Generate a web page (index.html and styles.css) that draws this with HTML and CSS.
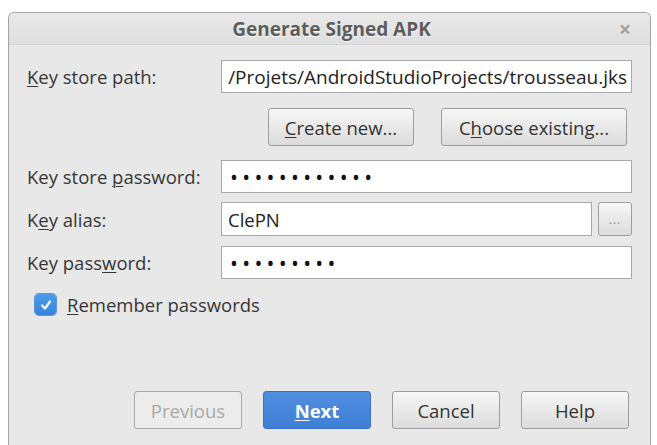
FILE: index.html
```html
<!DOCTYPE html>
<html lang="en">
<head>
    <meta charset="UTF-8">
    <title>Generate Signed APK</title>
    <link rel="stylesheet" href="styles.css">
</head>
<body>
    <div class="window">
        <div class="titlebar">
            <span class="title">Generate Signed APK</span>
            <span class="close">×</span>
        </div>
        <div class="content">
            <div class="row row-path">
                <label class="label"><u>K</u>ey store path:</label>
                <div class="field path"><span>/Projets/AndroidStudioProjects/trousseau.jks</span></div>
            </div>
            <div class="store-buttons">
                <button class="btn btn-create"><u>C</u>reate new...</button>
                <button class="btn btn-choose">C<u>h</u>oose existing...</button>
            </div>
            <div class="row row-pass">
                <label class="label">Key store <u>p</u>assword:</label>
                <div class="field"><span class="dots">••••••••••••</span></div>
            </div>
            <div class="row row-alias">
                <label class="label">K<u>e</u>y alias:</label>
                <div class="alias">
                    <div class="field">ClePN</div>
                    <button class="btn btn-more">...</button>
                </div>
            </div>
            <div class="row row-keypass">
                <label class="label">Key pass<u>w</u>ord:</label>
                <div class="field"><span class="dots">•••••••••</span></div>
            </div>
            <div class="remember">
                <span class="checkbox">
                    <svg width="14" height="14" viewBox="0 0 14 14"><path d="M3 7.5 L6 10.5 L11 3.5" fill="none" stroke="#fff" stroke-width="2.2" stroke-linecap="round" stroke-linejoin="round"/></svg>
                </span>
                <span><u>R</u>emember passwords</span>
            </div>
            <div class="footer">
                <button class="btn btn-wide" disabled>Previous</button>
                <button class="btn btn-wide btn-primary"><u>N</u>ext</button>
                <button class="btn btn-wide">Cancel</button>
                <button class="btn btn-wide">Help</button>
            </div>
        </div>
    </div>
</body>
</html>
```

FILE: styles.css
```css
body {
    margin: 0;
    background: #ffffff;
    font-family: "Open Sans", "DejaVu Sans", sans-serif;
    font-size: 18.5px;
    color: #363636;
    overflow: hidden;
}
.window {
    margin: 12px 6px 0 8px;
    height: 432px;
    border: 1px solid #a4a4a4;
    border-bottom: none;
    border-radius: 6px 6px 0 0;
    background: #e8e8e8;
    overflow: hidden;
}
.titlebar {
    height: 31px;
    display: flex;
    align-items: center;
    justify-content: center;
    position: relative;
    background: linear-gradient(#e9e9e9, #dedede);
    border-bottom: 1px solid #d4d4d4;
}
.title {
    font-weight: bold;
    font-size: 19px;
    color: #5c5c5c;
    text-shadow: 0 1px 0 #fff;
    margin-left: 4px;
}
.close {
    position: absolute;
    right: 19px;
    top: 2px;
    color: #a0a0a0;
    font-size: 21px;
    font-weight: bold;
}
.content {
    padding: 15px 18px 0 18px;
}
.row {
    display: grid;
    grid-template-columns: 194px 1fr;
    align-items: center;
}
.label u, .btn u, .remember u {
    text-decoration-thickness: 1px;
    text-underline-offset: 2px;
}
.field {
    height: 31px;
    background: #fff;
    border: 1px solid #a9a9a9;
    display: flex;
    align-items: center;
    padding: 0 6px;
    color: #222;
    white-space: nowrap;
    overflow: hidden;
}
.path {
    justify-content: flex-end;
    font-size: 19px;
    padding: 0 4px;
}
.dots {
    font-size: 21px;
    letter-spacing: 4.3px;
    padding-left: 2px;
    color: #111;
}
.store-buttons {
    display: flex;
    justify-content: flex-end;
    gap: 27px;
    margin: 15px 5px 0 0;
}
.btn {
    font-family: inherit;
    font-size: 18.5px;
    color: #333;
    height: 38px;
    border: 1px solid #9d9d9d;
    border-radius: 3px;
    background: linear-gradient(#f6f6f6, #dcdcdc);
    padding: 0;
}
.btn-create {
    width: 146px;
}
.btn-choose {
    width: 186px;
}
.row-pass {
    margin-top: 14px;
}
.row-alias {
    margin-top: 9px;
}
.alias {
    display: flex;
    gap: 6px;
}
.alias .field {
    flex: 1;
    height: 32px;
}
.btn-more {
    width: 34px;
    height: 34px;
    font-size: 12px;
    color: #888;
    letter-spacing: 1px;
}
.row-keypass {
    margin-top: 10px;
}
.remember {
    display: flex;
    align-items: center;
    gap: 11px;
    margin: 13px 0 0 8px;
}
.checkbox {
    width: 21px;
    height: 21px;
    border-radius: 4px;
    background: linear-gradient(#4d9bea, #3584dc);
    box-shadow: 0 0 0 1px #5b96d8;
    display: flex;
    align-items: center;
    justify-content: center;
}
.footer {
    display: flex;
    justify-content: flex-end;
    gap: 21px;
    margin: 74px 3px 0 0;
}
.btn-wide {
    width: 108px;
}
.btn[disabled] {
    color: #a9a9a9;
    background: #ececec;
    border-color: #a8a8a8;
}
.btn-primary {
    color: #fff;
    font-weight: bold;
    background: linear-gradient(#4f8edf, #3f7fd6);
    border-color: #3a73c4;
}
```
